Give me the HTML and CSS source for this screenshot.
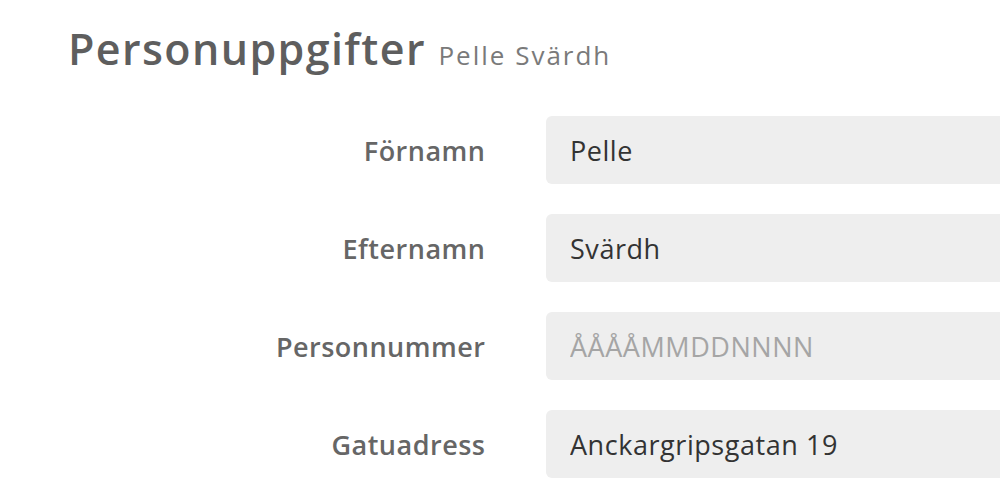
FILE: index.html
```html
<!DOCTYPE html>
<html lang="sv">
<head>
<meta charset="utf-8">
<title>Personuppgifter</title>
<link rel="stylesheet" href="styles.css">
</head>
<body>
<div class="page">
  <h1 class="title">Personuppgifter <small class="subtitle">Pelle Svärdh</small></h1>
  <form class="form">
    <div class="row">
      <label class="label" for="f1">Förnamn</label>
      <input class="input" id="f1" type="text" value="Pelle">
    </div>
    <div class="row">
      <label class="label" for="f2">Efternamn</label>
      <input class="input" id="f2" type="text" value="Svärdh">
    </div>
    <div class="row">
      <label class="label" for="f3">Personnummer</label>
      <input class="input" id="f3" type="text" placeholder="ÅÅÅÅMMDDNNNN">
    </div>
    <div class="row">
      <label class="label" for="f4">Gatuadress</label>
      <input class="input" id="f4" type="text" value="Anckargripsgatan 19">
    </div>
  </form>
</div>
</body>
</html>
```
FILE: styles.css
```css
html, body {
  margin: 0;
  padding: 0;
  background: #fff;
  overflow: hidden;
}
body {
  font-family: "Open Sans", "Liberation Sans", sans-serif;
  width: 1000px;
  height: 504px;
}
.page {
  padding: 23px 0 0 68px;
  width: 1200px;
}
.title {
  margin: 0;
  height: 52px;
  font-size: 43px;
  font-weight: 600;
  letter-spacing: 1.4px;
  color: #5e5e5e;
  line-height: 52px;
  white-space: nowrap;
}
.subtitle {
  font-size: 26px;
  font-weight: 400;
  letter-spacing: 2px;
  line-height: 1;
  color: #7a7a7a;
}
.form {
  margin-top: 41px;
  display: flex;
  flex-direction: column;
  gap: 30px;
}
.row {
  display: grid;
  grid-template-columns: 417px 1fr;
  column-gap: 61px;
  align-items: center;
}
.label {
  text-align: right;
  font-size: 27px;
  font-weight: 600;
  letter-spacing: 0.5px;
  color: #666;
  margin-right: -0.5px;
}
.input {
  height: 68px;
  box-sizing: border-box;
  border: none;
  border-radius: 6px;
  background: #eeeeee;
  padding: 0 24px;
  font-family: inherit;
  font-size: 27px;
  letter-spacing: 0.55px;
  color: #333;
  outline: none;
}
.input::placeholder {
  color: #a5a5a5;
}
```
